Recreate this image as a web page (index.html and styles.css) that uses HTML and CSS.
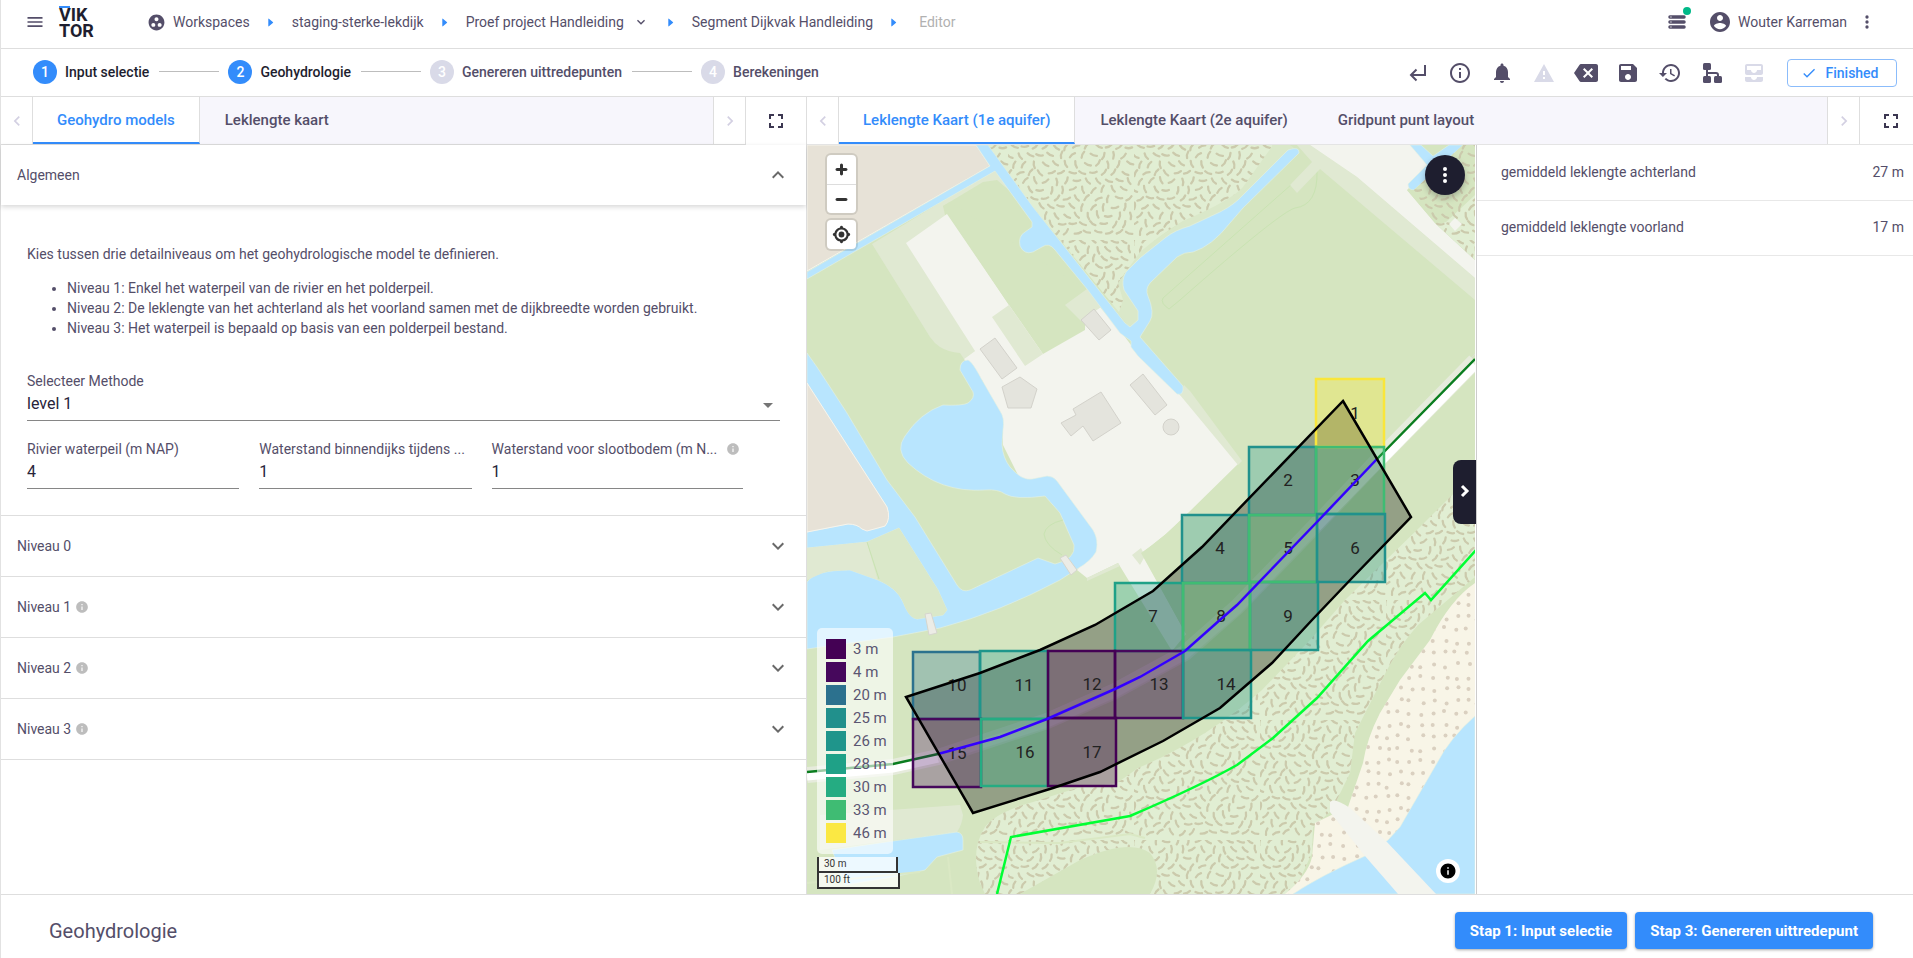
FILE: index.html
```html
<!DOCTYPE html>
<html lang="nl">
<head>
<meta charset="utf-8">
<title>Geohydrologie</title>
<link rel="stylesheet" href="styles.css">
</head>
<body>
<svg class="defs" aria-hidden="true">
  <symbol id="i-menu" viewBox="0 0 24 24"><path d="M3 18h18v-2H3v2zm0-5h18v-2H3v2zm0-7v2h18V6H3z"/></symbol>
  <symbol id="i-group" viewBox="0 0 24 24"><path d="M12 2C6.48 2 2 6.48 2 12s4.48 10 10 10 10-4.48 10-10S17.52 2 12 2zM8 17.5c-1.38 0-2.5-1.12-2.5-2.5s1.12-2.5 2.5-2.5 2.5 1.12 2.5 2.5-1.12 2.5-2.5 2.5zM9.5 8c0-1.38 1.12-2.5 2.5-2.5s2.5 1.12 2.5 2.5-1.12 2.5-2.5 2.5S9.5 9.38 9.5 8zm6.5 9.5c-1.38 0-2.5-1.12-2.5-2.5s1.12-2.5 2.5-2.5 2.5 1.12 2.5 2.5-1.12 2.5-2.5 2.5z"/></symbol>
  <symbol id="i-server" viewBox="0 0 24 24"><path fill-rule="evenodd" d="M3.500 4h17a1.500 1.500 0 0 1 0 4h-17a1.500 1.500 0 0 1 0-4zM4 5.300v1.400h1.500v-1.400zM3.500 10h17a1.500 1.500 0 0 1 0 4h-17a1.500 1.500 0 0 1 0-4zM4 11.300v1.400h1.500v-1.400zM3.500 16h17a1.500 1.500 0 0 1 0 4h-17a1.500 1.500 0 0 1 0-4zM4 17.300v1.400h1.500v-1.400z"/></symbol>
  <symbol id="i-user" viewBox="0 0 24 24"><path d="M12 2C6.48 2 2 6.48 2 12s4.48 10 10 10 10-4.48 10-10S17.52 2 12 2zm0 3c1.66 0 3 1.34 3 3s-1.34 3-3 3-3-1.34-3-3 1.34-3 3-3zm0 14.2c-2.500 0-4.710-1.280-6-3.220.03-1.990 4-3.080 6-3.080 1.990 0 5.970 1.090 6 3.080-1.290 1.940-3.500 3.220-6 3.220z"/></symbol>
  <symbol id="i-dots" viewBox="0 0 24 24"><circle cx="12" cy="6" r="2"/><circle cx="12" cy="12" r="2"/><circle cx="12" cy="18" r="2"/></symbol>
  <symbol id="i-return" viewBox="0 0 24 24"><path fill="none" stroke="currentColor" stroke-width="2" d="M19 4v10H5.500M10.500 8.500 5 14l5.500 5.500"/></symbol>
  <symbol id="i-info" viewBox="0 0 24 24"><path d="M11 7h2v2h-2zm0 4h2v6h-2zm1-9C6.480 2 2 6.480 2 12s4.480 10 10 10 10-4.480 10-10S17.520 2 12 2zm0 18c-4.410 0-8-3.590-8-8s3.590-8 8-8 8 3.590 8 8-3.590 8-8 8z"/></symbol>
  <symbol id="i-infofull" viewBox="0 0 24 24"><path d="M12 2C6.480 2 2 6.480 2 12s4.480 10 10 10 10-4.480 10-10S17.520 2 12 2zm1 15h-2v-6h2v6zm0-8h-2V7h2v2z"/></symbol>
  <symbol id="i-bell" viewBox="0 0 24 24"><path d="M12 22c1.100 0 2-.9 2-2h-4c0 1.100.89 2 2 2zm6-6v-5c0-3.070-1.640-5.640-4.500-6.320V4c0-.83-.67-1.500-1.500-1.500s-1.500.67-1.500 1.500v.68C7.630 5.360 6 7.920 6 11v5l-2 2v1h16v-1l-2-2z"/></symbol>
  <symbol id="i-warn" viewBox="0 0 24 24"><path d="M2 21h20L12 3 2 21zm11-3h-2v-2h2v2zm0-4h-2v-4h2v4z"/></symbol>
  <symbol id="i-back" viewBox="0 0 24 24"><path d="M22 3H7c-.69 0-1.230.35-1.590.88L0 12l5.410 8.110c.36.53.9.89 1.590.89h15c1.100 0 2-.9 2-2V5c0-1.100-.9-2-2-2zm-3 12.590L17.590 17 14 13.410 10.410 17 9 15.590 12.590 12 9 8.410 10.410 7 14 10.590 17.590 7 19 8.410 15.410 12 19 15.590z"/></symbol>
  <symbol id="i-save" viewBox="0 0 24 24"><path d="M17 3H5c-1.110 0-2 .9-2 2v14c0 1.100.89 2 2 2h14c1.100 0 2-.9 2-2V7l-4-4zm-5 16c-1.660 0-3-1.340-3-3s1.340-3 3-3 3 1.340 3 3-1.340 3-3 3zm3-10H5V5h10v4z"/></symbol>
  <symbol id="i-history" viewBox="0 0 24 24"><path d="M13 3c-4.970 0-9 4.030-9 9H1l3.890 3.890.07.14L9 12H6c0-3.870 3.130-7 7-7s7 3.130 7 7-3.130 7-7 7c-1.930 0-3.680-.79-4.940-2.060l-1.420 1.420C8.270 19.990 10.510 21 13 21c4.970 0 9-4.030 9-9s-4.030-9-9-9zm-1 5v5l4.280 2.540.72-1.210-3.500-2.080V8H12z"/></symbol>
  <symbol id="i-tree" viewBox="0 0 24 24"><rect x="3" y="2" width="8" height="7" rx="1.500"/><rect x="3" y="15" width="8" height="7" rx="1.500"/><rect x="14" y="15" width="8" height="7" rx="1.500"/><path fill="none" stroke="currentColor" stroke-width="2" d="M7 8v8M7 12h9q2 0 2 2v2"/></symbol>
  <symbol id="i-inbox" viewBox="0 0 24 24"><path d="M19 3H5c-1.100 0-2 .9-2 2v7c0 1.100.9 2 2 2h14c1.100 0 2-.9 2-2V5c0-1.100-.9-2-2-2zm0 6h-4c0 1.620-1.380 3-3 3s-3-1.380-3-3H5V5h14v4zm-4 7h6v3c0 1.100-.9 2-2 2H5c-1.100 0-2-.9-2-2v-3h6c0 1.660 1.340 3 3 3s3-1.340 3-3z"/></symbol>
  <symbol id="i-check" viewBox="0 0 24 24"><path d="M9 16.200 4.800 12l-1.400 1.400L9 19 21 7l-1.400-1.400z"/></symbol>
  <symbol id="i-full" viewBox="0 0 24 24"><path d="M7 14H5v5h5v-2H7v-3zm-2-4h2V7h3V5H5v5zm12 7h-3v2h5v-5h-2v3zM14 5v2h3v3h2V5h-5z"/></symbol>
  <symbol id="i-left" viewBox="0 0 24 24"><path d="M15.410 7.410 14 6l-6 6 6 6 1.410-1.410L10.830 12z"/></symbol>
  <symbol id="i-right" viewBox="0 0 24 24"><path d="M8.590 16.590 10 18l6-6-6-6-1.410 1.410L13.170 12z"/></symbol>
  <symbol id="i-down" viewBox="0 0 24 24"><path d="M16.590 8.590 12 13.170 7.410 8.590 6 10l6 6 6-6z"/></symbol>
  <symbol id="i-up" viewBox="0 0 24 24"><path d="m12 8-6 6 1.410 1.410L12 10.830l4.590 4.580L18 14z"/></symbol>
  <symbol id="i-tri" viewBox="0 0 6 10"><path d="M0 1Q0 0 1 1L5 4.500Q6 5 5 5.500L1 9Q0 10 0 9z"/></symbol>
</svg>

<div class="app">
<header class="topbar">
  <button class="icon-btn" aria-label="Menu"><svg class="ic20"><use href="#i-menu"/></svg></button>
  <a class="logo" href="#">VIKTOR</a>
  <nav class="crumbs">
    <a class="ws" href="#"><svg class="ic19"><use href="#i-group"/></svg>Workspaces</a>
    <svg class="tri"><use href="#i-tri"/></svg>
    <a href="#">staging-sterke-lekdijk</a>
    <svg class="tri"><use href="#i-tri"/></svg>
    <a href="#">Proef project Handleiding</a>
    <button class="icon-btn crumb-menu" aria-label="Toon projecten"><svg class="ic16"><use href="#i-down"/></svg></button>
    <svg class="tri"><use href="#i-tri"/></svg>
    <a href="#">Segment Dijkvak Handleiding</a>
    <svg class="tri"><use href="#i-tri"/></svg>
    <span class="current">Editor</span>
  </nav>
  <div class="account">
    <button class="icon-btn jobs" aria-label="Taken"><svg class="ic20"><use href="#i-server"/></svg><i class="badge"></i></button>
    <button class="user"><svg class="ic24"><use href="#i-user"/></svg>Wouter Karreman</button>
    <button class="icon-btn" aria-label="Meer"><svg class="ic20"><use href="#i-dots"/></svg></button>
  </div>
</header>

<div class="steps">
  <ol class="stepper">
    <li class="step on"><a href="#"><b>1</b>Input selectie</a></li>
    <li class="step on"><a href="#"><b>2</b>Geohydrologie</a></li>
    <li class="step"><a href="#"><b>3</b>Genereren uittredepunten</a></li>
    <li class="step"><a href="#"><b>4</b>Berekeningen</a></li>
  </ol>
  <div class="tools">
    <button class="icon-btn" aria-label="Terug"><svg class="ic24"><use href="#i-return"/></svg></button>
    <button class="icon-btn" aria-label="Info"><svg class="ic24"><use href="#i-info"/></svg></button>
    <button class="icon-btn" aria-label="Meldingen"><svg class="ic24"><use href="#i-bell"/></svg></button>
    <button class="icon-btn off" aria-label="Waarschuwingen"><svg class="ic24"><use href="#i-warn"/></svg></button>
    <button class="icon-btn" aria-label="Wissen"><svg class="ic24"><use href="#i-back"/></svg></button>
    <button class="icon-btn" aria-label="Opslaan"><svg class="ic24"><use href="#i-save"/></svg></button>
    <button class="icon-btn" aria-label="Geschiedenis"><svg class="ic24"><use href="#i-history"/></svg></button>
    <button class="icon-btn" aria-label="Structuur"><svg class="ic24"><use href="#i-tree"/></svg></button>
    <button class="icon-btn off" aria-label="Archief"><svg class="ic24"><use href="#i-inbox"/></svg></button>
    <button class="finished"><svg class="ic16"><use href="#i-check"/></svg>Finished</button>
  </div>
</div>

<main class="work">
  <section class="pane form-pane">
    <div class="tabbar">
      <button class="scroll first" aria-label="Vorige"><svg class="ic20"><use href="#i-left"/></svg></button>
      <div class="tabs"><button class="tab active">Geohydro models</button><button class="tab">Leklengte kaart</button></div>
      <button class="scroll" aria-label="Volgende"><svg class="ic20"><use href="#i-right"/></svg></button>
      <button class="fullscreen" aria-label="Volledig scherm"><svg class="ic24"><use href="#i-full"/></svg></button>
    </div>
    <div class="accordion">
      <button class="acc-head open">Algemeen<svg class="ic24 chev"><use href="#i-up"/></svg></button>
      <div class="acc-body">
        <p>Kies tussen drie detailniveaus om het geohydrologische model te definieren.</p>
        <ul>
          <li>Niveau 1: Enkel het waterpeil van de rivier en het polderpeil.</li>
          <li>Niveau 2: De leklengte van het achterland als het voorland samen met de dijkbreedte worden gebruikt.</li>
          <li>Niveau 3: Het waterpeil is bepaald op basis van een polderpeil bestand.</li>
        </ul>
        <div class="field method">
          <label for="method">Selecteer Methode</label>
          <select id="method"><option>level 1</option></select>
        </div>
        <div class="fields">
          <div class="field"><label for="f1">Rivier waterpeil (m NAP)</label><input id="f1" type="text" value="4"></div>
          <div class="field"><label for="f2">Waterstand binnendijks tijdens ...</label><input id="f2" type="text" value="1"></div>
          <div class="field"><label for="f3"><span>Waterstand voor slootbodem (m N...</span><svg class="ic14 hint"><use href="#i-infofull"/></svg></label><input id="f3" type="text" value="1"></div>
        </div>
      </div>
      <button class="acc-head">Niveau 0<svg class="ic24 chev"><use href="#i-down"/></svg></button>
      <button class="acc-head">Niveau 1<svg class="ic14 hint"><use href="#i-infofull"/></svg><svg class="ic24 chev"><use href="#i-down"/></svg></button>
      <button class="acc-head">Niveau 2<svg class="ic14 hint"><use href="#i-infofull"/></svg><svg class="ic24 chev"><use href="#i-down"/></svg></button>
      <button class="acc-head">Niveau 3<svg class="ic14 hint"><use href="#i-infofull"/></svg><svg class="ic24 chev"><use href="#i-down"/></svg></button>
    </div>
  </section>

  <section class="pane view-pane">
    <div class="tabbar lined">
      <button class="scroll first" aria-label="Vorige"><svg class="ic20"><use href="#i-left"/></svg></button>
      <div class="tabs"><button class="tab active">Leklengte Kaart (1e aquifer)</button><button class="tab">Leklengte Kaart (2e aquifer)</button><button class="tab">Gridpunt punt layout</button></div>
      <button class="scroll" aria-label="Volgende"><svg class="ic20"><use href="#i-right"/></svg></button>
      <button class="fullscreen" aria-label="Volledig scherm"><svg class="ic24"><use href="#i-full"/></svg></button>
    </div>
    <div class="view">
      <div class="map">
        <svg class="canvas" viewBox="807 145 668 749" preserveAspectRatio="xMidYMid slice">
          <defs>
            <pattern id="wood" width="126" height="120" patternUnits="userSpaceOnUse"></pattern>
            <pattern id="sand" width="90" height="84" patternUnits="userSpaceOnUse"></pattern>
          </defs>
          <rect class="grass" x="807" y="145" width="668" height="749"/>
          <path class="beige" d="M807 145H976L990 166 807 271z"/>
          <path class="pale" d="M872 244 994 170 1012 193 997 180 983 182 943 206 975 351 964 359 960 353Q948 352 940 347 934 343 930 337z"/>
          <path class="paved" d="M906 243 947 214 1009 305 1085 330 1081 321 1100 307 1122 333 1140 357 1180 395 1192 400 1240 462 1188 513 1166 534 1142 553 1186 634 1172 651 1118 563 1087 578 1077 570 1096 548 1090 528 1055 481 1020 479 1003 445 1003 420 982 380 964 359 975 351z"/>
          <path class="grass" d="M943 206 950 202 1086 290 1085 330 1043 354 1009 305z"/>
          <path class="pale" d="M992 317 1009 305 1043 354 1025 366zM1065 305 1087 289 1101 307 1081 321zM1184 385 1190 391 1242 461 1238 465 1180 395zM1132 555 1141 548 1145 556 1140 565zM1087 578 1118 563 1120 566 1087 581z"/>
          <path class="grass" d="M1141 553Q1165 537 1188 513L1300 500 1230 600 1186 634z"/>
          <path class="rim" d="M1273 145H1290L1299 152 1230 215 1150 265 1140 310 1138 322 1130 328 1112 306 1118 283 1140 250 1183 221 1230 193z"/>
          <path class="woodland" d="M988 145H1273L1243 187Q1232 200 1183 221 1160 235 1140 252L1118 283 1123 300 1119 312 1033 207z"/>
          <path class="wood" d="M988 145H1273L1243 187Q1232 200 1183 221 1160 235 1140 252L1118 283 1123 300 1119 312 1033 207z"/>
          <path class="water" d="M807 272 990 166 976 145H988L1033 207 1125 323 1130 327 1138 320V311L1124 290Q1121 280 1126 272L1140 258 1165 238Q1175 230 1190 226L1220 212Q1234 205 1243 195L1288 150Q1300 146 1299 153L1243 208 1230 223Q1212 246 1193 252 1184 252 1177 257L1150 283Q1145 289 1148 296 1155 313 1150 321L1140 337 1183 386Q1184 396 1177 394L1138 356 1131 347V341L1124 336 1120 333 1087 289 1055 250Q1049 242 1042 247L1033 252Q1024 255 1020 246 1018 236 1025 232L1032 227V222L995 171 807 279z"/>
          <path class="water" d="M960 370Q960 360 968 360 972 361 982 380L1000 411Q1005 418 1003 430L1002 445Q1003 458 1010 467 1022 481 1032 479L1047 476Q1053 476 1057 481L1093 530Q1099 540 1096 552 1090 562 1077 569L1060 580Q1000 612 940 628L893 637 807 649V582Q815 570 850 570L878 580Q897 588 903 602 909 618 917 619L943 615 947 610 938 590 899 528 867 542 807 548V532L848 524Q857 524 862 529 868 532 885 526 891 519 887 507L807 383V353L817 367 847 413 887 480 915 517 957 585Q962 593 970 590L1038 558 1055 564Q1076 559 1074 545L1060 513 1045 496Q1015 500 1005 494 998 489 985 490 940 493 908 463 895 450 905 436 920 413 943 405 962 406 968 403 975 398 973 392z"/>
          <path class="beige" d="M807 383 887 507Q891 519 885 526L867 531 862 529Q857 524 848 524L807 532z"/>
          <path class="pale" d="M807 548 867 542 878 580 850 570 827 571 807 580z"/>
          <path class="rim" d="M867 542 899 528 938 590 947 610 943 615 917 619Q909 618 903 602 897 588 878 580z"/>
          <path class="hair" d="M867 542 879 579M1063 520Q1046 524 1044 534 1045 545 1062 555M1317 171Q1318 205 1295 208 1280 212 1180 300L1169 309Q1160 303 1163 298L1292 184"/>
          <path class="bridge" d="M1060 558 1066 555 1077 570 1071 575zM925 614 931 613 937 633 929 635z"/>
          <path class="pale" d="M1297 145H1310L1357 177 1475 278V300L1320 169 1297 193 1290 185 1312 162z"/>
          <path class="paved" d="M1310 145H1410L1432 165 1407 190 1435 223 1475 260V278L1357 177z"/>
          <path class="water" d="M1410 145H1421L1433 156 1449 145H1463L1414 190Q1408 190 1408 184L1427 165z"/>
          <path class="grass" d="M1414 190 1463 145H1475V260L1435 223 1407 190z"/>
          <path class="woodland" d="M1446 222 1475 195V260L1437 225z"/>
          <path class="wood" d="M1414 190 1463 145H1475V260L1435 223z"/>
          <path class="paved" d="M1455 218 1462 224 1455 231 1449 224z"/>
          <path class="building" d="M980 349 995 338 1017 368 1002 379zM1081 320 1094 309 1111 330 1099 340zM1002 387 1020 377 1037 389 1031 408H1008zM1073 409 1101 392 1121 423 1093 441 1083 426 1071 436 1061 423 1076 415zM1130 385 1143 374 1167 405 1155 415z"/>
          <circle class="building" cx="1171" cy="427" r="8"/>
          <path class="woodland" d="M1475 478 1452 495 1420 527 1345 600 1310 640 1262 690Q1205 740 1138 768L1117 783 1077 788 1033 802Q996 812 985 827 970 850 980 883L985 894H1020L1080 860Q1130 838 1150 853 1164 870 1150 894H1293L1312 853 1313 827 1332 810 1350 773 1355 733 1387 670Q1400 645 1418 625L1475 577z"/>
          <path class="wood" d="M1475 478 1452 495 1420 527 1345 600 1310 640 1262 690Q1205 740 1138 768L1117 783 1077 788 1033 802Q996 812 985 827 970 850 980 883L985 894H1020L1080 860Q1130 838 1150 853 1164 870 1150 894H1293L1312 853 1313 827 1332 810 1350 773 1355 733 1387 670Q1400 645 1418 625L1475 577z"/>
          <path class="rimline" d="M980 842 1060 843 1130 834 1145 838"/>
          <path class="beach" d="M1475 583Q1450 600 1430 640L1400 680 1380 713Q1367 738 1363 763L1348 807 1315 823 1312 857Q1308 875 1285 894H1475z"/>
          <path class="sand" d="M1475 583Q1450 600 1430 640L1400 680 1380 713Q1367 738 1363 763L1348 807 1315 823 1312 857Q1308 875 1285 894H1475z"/>
          <path class="water" d="M1293 894Q1320 876 1365 856L1388 840 1400 827 1437 763Q1450 738 1475 716V894z"/>
          <path class="paved" d="M1330 802Q1334 797 1350 808L1387 842 1436 894H1398L1365 856 1330 812z"/>
          <path class="pale" d="M820 815 960 805 963 815Q962 825 957 832L820 850z"/>
          <path class="water" d="M832 850 893 841 957 832Q963 833 963 840L963 850 937 857 925 870 893 877 845 885z"/>
          <path class="rimline" d="M807 883 920 872M948 857 952 894"/>

          <path class="road-edge" d="M1475 354 1372 458 1317 516 1237 599 1185 645 1115 683 1047 713 938 754 893 766 807 774"/>
          <path class="road-base" d="M1475 361 1377 461 1317 524 1237 607 1185 653 1115 691 1047 721 938 757 893 767 807 775"/>
          <path class="road" d="M1475 365 1379 463 1317 527M938 758 893 768 807 776"/>
          <path class="road-faint" d="M1317 527 1237 610 1185 655 1115 693 1047 723 938 758"/>
          <path class="dike" d="M1475 359 1377 459M938 754 893 764 807 772"/>

          <path class="segment" d="M1343 401 1411 517 1353 577 1312 620 1272 663 1220 708 1163 741 1100 772 1053 788 973 813 906 697 980 673 1040 650 1095 625 1153 591 1202 547z"/>
          <g class="cells">
            <rect x="1316" y="379" width="68" height="68" fill="#fbe723" stroke="#f9e63b"/>
            <rect x="1249" y="447" width="67" height="68" fill="#21918c" stroke="#21918c"/>
            <rect x="1182" y="515" width="67" height="68" fill="#21918c" stroke="#21918c"/>
            <rect x="1115" y="583" width="68" height="68" fill="#1fa187" stroke="#1fa187"/>
            <rect x="913" y="652" width="67" height="67" fill="#2c728e" stroke="#2c728e"/>
            <rect x="980" y="651" width="68" height="68" fill="#1f968b" stroke="#1f968b"/>
            <rect x="1250" y="582" width="68" height="68" fill="#1f958b" stroke="#1f958b"/>
            <rect x="1316" y="447" width="68" height="67" fill="#3fbc73" stroke="#3fbc73"/>
            <rect x="1249" y="515" width="68" height="67" fill="#3fbc73" stroke="#3fbc73"/>
            <rect x="1183" y="583" width="67" height="67" fill="#3fbc73" stroke="#3fbc73"/>
            <rect x="1317" y="514" width="68" height="68" fill="#21918c" stroke="#21918c"/>
            <rect x="913" y="719" width="68" height="68" fill="#46085c" stroke="#46085c"/>
            <rect x="981" y="719" width="67" height="67" fill="#25ac82" stroke="#25ac82"/>
            <rect x="1115" y="651" width="68" height="67" fill="#46085c" stroke="#46085c"/>
            <rect x="1048" y="651" width="67" height="67" fill="#440154" stroke="#440154"/>
            <rect x="1183" y="650" width="68" height="68" fill="#1f958b" stroke="#1f958b"/>
            <rect x="1048" y="718" width="68" height="68" fill="#440154" stroke="#440154"/>
          </g>
          <g class="nums">
            <text x="1355" y="419">1</text><text x="1288" y="486">2</text><text x="1355" y="486">3</text>
            <text x="1220" y="554">4</text><text x="1288" y="554">5</text><text x="1355" y="554">6</text>
            <text x="1153" y="622">7</text><text x="1221" y="622">8</text><text x="1288" y="622">9</text>
            <text x="957" y="691">10</text><text x="1024" y="691">11</text><text x="1092" y="690">12</text>
            <text x="1159" y="690">13</text><text x="1226" y="690">14</text><text x="957" y="759">15</text>
            <text x="1025" y="758">16</text><text x="1092" y="758">17</text>
          </g>
          <path class="axis" d="M1377 459 1317 522 1237 605 1221 619 1185 651 1140 677 1115 689 1047 719 1000 737 938 754"/>
          <path class="outline" d="M1343 401 1411 517 1353 577 1312 620 1272 663 1220 708 1163 741 1100 772 1053 788 973 813 906 697 980 673 1040 650 1095 625 1153 591 1202 547z"/>
          <path class="border-line" d="M1476 550 1431 600 1425 593 1368 641 1317 698 1273 738 1237 765Q1200 786 1130 816L1011 837 997 894"/>
        </svg>

        <div class="zoom">
          <div class="group">
            <button aria-label="Inzoomen"><svg class="ic29" viewBox="0 0 29 29"><path d="M14.500 8.500c-.75 0-1.500.75-1.500 1.500v3h-3c-.75 0-1.500.75-1.500 1.500S9.250 16 10 16h3v3c0 .75.75 1.500 1.500 1.500S16 19.750 16 19v-3h3c.75 0 1.500-.75 1.500-1.500S19.750 13 19 13h-3v-3c0-.75-.75-1.500-1.500-1.500z"/></svg></button>
            <button aria-label="Uitzoomen"><svg class="ic29" viewBox="0 0 29 29"><path d="M10 13c-.75 0-1.500.75-1.500 1.500S9.250 16 10 16h9c.75 0 1.500-.75 1.500-1.500S19.750 13 19 13h-9z"/></svg></button>
          </div>
          <div class="group">
            <button aria-label="Mijn locatie"><svg class="ic29" viewBox="0 0 20 20"><path d="M10 4C9 4 9 5 9 5v.1A5 5 0 0 0 5.100 9H5s-1 0-1 1 1 1 1 1h.1A5 5 0 0 0 9 14.900v.1s0 1 1 1 1-1 1-1v-.1a5 5 0 0 0 3.900-3.900h.1s1 0 1-1-1-1-1-1h-.1A5 5 0 0 0 11 5.100V5s0-1-1-1zm0 2.500a3.500 3.500 0 1 1 0 7 3.500 3.500 0 1 1 0-7z"/><circle cx="10" cy="10" r="2"/></svg></button>
          </div>
        </div>
        <div class="corner">
          <ul class="legend">
            <li><i class="c3"></i>3 m</li><li><i class="c4"></i>4 m</li><li><i class="c20"></i>20 m</li>
            <li><i class="c25"></i>25 m</li><li><i class="c26"></i>26 m</li><li><i class="c28"></i>28 m</li>
            <li><i class="c30"></i>30 m</li><li><i class="c33"></i>33 m</li><li><i class="c46"></i>46 m</li>
          </ul>
          <div class="scale metric">30 m</div>
          <div class="scale imperial">100 ft</div>
        </div>
        <button class="fab" aria-label="Kaartmenu"><svg class="ic24"><use href="#i-dots"/></svg></button>
        <button class="drawer" aria-label="Gegevens verbergen"><svg class="ic24" viewBox="0 0 24 24"><path fill="none" stroke="currentColor" stroke-width="3" d="m9 6 5 5-5 5"/></svg></button>
        <button class="attrib" aria-label="Bronvermelding"><svg class="ic18"><use href="#i-infofull"/></svg></button>
      </div>
      <dl class="data">
        <div><dt>gemiddeld leklengte achterland</dt><dd>27 m</dd></div>
        <div><dt>gemiddeld leklengte voorland</dt><dd>17 m</dd></div>
      </dl>
    </div>
  </section>
</main>

<footer class="bottom">
  <h1>Geohydrologie</h1>
  <button class="primary">Stap 1: Input selectie</button>
  <button class="primary">Stap 3: Genereren uittredepunt</button>
</footer>
</div>
<script src="texture.js"></script>
</body>
</html>
```
FILE: styles.css
```css
* { box-sizing: border-box; }
body {
  margin: 0;
  font-family: Roboto, "Liberation Sans", sans-serif;
  font-size: 14px;
  line-height: 20px;
  color: #544e69;
  background: #fff;
}
button { font: inherit; color: inherit; background: none; border: 0; padding: 0; cursor: pointer; }
a { color: inherit; text-decoration: none; }
svg { fill: currentColor; flex: none; display: block; }
ul, ol, dl, dd { margin: 0; padding: 0; list-style: none; }
.defs { position: absolute; width: 0; height: 0; }
.ic14 { width: 14px; height: 14px; }
.ic16 { width: 16px; height: 16px; }
.ic18 { width: 18px; height: 18px; }
.ic19 { width: 19px; height: 19px; }
.ic20 { width: 20px; height: 20px; }
.ic24 { width: 24px; height: 24px; }
.ic29 { width: 29px; height: 29px; }
.icon-btn { display: block; }
.off { color: #d9dae8; }

.app { display: flex; flex-direction: column; min-height: 100vh; border-left: 1px solid #e2e2e2; }

/* top bar */
.topbar { display: flex; align-items: center; height: 49px; padding: 0 36px 4px 24px; border-bottom: 1px solid #dedede; }
.logo {
  width: 37px; margin-left: 14px; padding-top: 2px; word-break: break-all;
  font-size: 18px; line-height: 16px; font-weight: 700; color: #1e1e2f;
  background: linear-gradient(#338cfb, #338cfb) 0 1px / 11px 2px no-repeat;
}
.crumbs { display: flex; align-items: center; gap: 18px; margin-left: 51px; }
.ws { display: flex; align-items: center; gap: 7px; }
.tri { width: 6px; height: 9px; color: #338cfb; }
.crumb-menu { margin: 0 1px 0 -9px; }
.current { color: #b1b1b1; margin-left: 4px; }
.account { display: flex; align-items: center; margin-left: auto; gap: 10px; }
.jobs { position: relative; margin-right: 11px; }
.badge { position: absolute; right: -4px; top: -5px; width: 8px; height: 8px; border-radius: 50%; background: #00b988; }
.user { display: flex; align-items: center; gap: 6px; }

/* stepper */
.steps { display: flex; align-items: center; justify-content: space-between; height: 48px; padding: 0 16px 0 32px; border-bottom: 1px solid #dedede; }
.stepper { display: flex; font-weight: 500; margin-bottom: 2px; }
.step { display: flex; align-items: center; }
.step a { display: flex; align-items: center; gap: 8px; }
.step + .step::before { content: ""; width: 60px; height: 1px; margin: 0 9px 0 10px; background: #bdbdbd; }
.step b { width: 24px; height: 24px; line-height: 24px; border-radius: 50%; text-align: center; font-weight: 500; color: #fff; background: #d9dae8; }
.step.on { color: #1e1e2f; }
.step.on b { background: #338cfb; }
.tools { display: flex; align-items: center; gap: 18px; }
.finished {
  display: flex; align-items: center; justify-content: center; gap: 8px; height: 28px; width: 110px; margin-left: 3px; padding-right: 4px;
  border: 1px solid #8bbcfb; border-radius: 4px; font-weight: 500; color: #338cfb;
}

/* panes */
.work { flex: 1; display: grid; grid-template-columns: 806fr 1106fr; }
.pane { display: flex; flex-direction: column; min-width: 0; }
.form-pane { border-right: 1px solid #dedede; }
.tabbar { display: flex; height: 48px; }
.view-pane .tabbar { border-bottom: 1px solid #e4e4e4; }
.scroll { display: flex; align-items: center; justify-content: center; width: 33px; color: #d3d0e2; border: 1px solid #dedede; border-width: 0 1px 1px; }
.scroll.first { width: 32px; border-left: 0; }
.tabs { flex: 1; display: flex; background: #f7f6fc; border-bottom: 1px solid #dedede; }
.lined .tabs, .lined .scroll { border-bottom: 0; }
.tab { padding: 0 25px 1px; font-size: 15px; font-weight: 500; }
.tab.active { padding: 1px 24px 0; color: #338cfb; background: #fff; border-right: 1px solid #dedede; border-bottom: 2px solid #338cfb; }
.fullscreen { width: 53px; padding-left: 8px; display: flex; align-items: center; justify-content: center; color: #3c3751; }
.form-pane .fullscreen { width: 60px; padding-left: 0; }

/* accordion */
.acc-head { display: flex; align-items: center; gap: 4px; width: 100%; height: 61px; padding: 0 16px; border-bottom: 1px solid #dedede; }
.acc-head.open { border-bottom: 0; height: 60px; box-shadow: 0 2px 5px rgba(0, 0, 0, .16); }
.chev { margin-left: auto; color: #696969; }
.hint { color: #bdbdbd; }
.acc-body { padding: 39px 26px 26px; border-bottom: 1px solid #dedede; }
.acc-body p { margin: 0 0 14px; }
.acc-body ul { list-style: disc; padding-left: 40px; margin-bottom: 33px; }
.field { display: flex; flex-direction: column; min-width: 0; }
.field label { display: flex; align-items: center; gap: 9px; height: 20px; white-space: nowrap; }
.field input, .field select {
  width: 100%; height: 30px; padding: 0 0 4px; border: 0; border-bottom: 1px solid #868686; border-radius: 0;
  background: none; font: 16px/20px Roboto, "Liberation Sans", sans-serif; color: #27243a; outline: 0; appearance: none;
}
.method { margin-bottom: 18px; position: relative; }
.method::after { content: ""; position: absolute; right: 7px; bottom: 13px; border: 5px solid transparent; border-top-color: #757575; border-bottom: 0; }
.fields { display: grid; grid-template-columns: 212fr 212fr 251fr 17fr; gap: 20px; }

/* view */
.view { flex: 1; display: grid; grid-template-columns: 670fr 436fr; }
.map { position: relative; overflow: hidden; border-right: 1px solid #ccc; }
.canvas { position: absolute; inset: 0; width: 100%; height: 100%; border-right: 1px solid #fff; }
.grass { fill: #d5e5c0; }
.pale { fill: #e0e9d2; }
.rim { fill: #dae8c9; }
.beige { fill: #e7e2d7; stroke: #f6f4ee; stroke-width: 1; }
.paved { fill: #f3f4ee; }
.water { fill: #b8e5fe; stroke: #e6f1e0; stroke-width: .6; }
.woodland { fill: #e1eed3; }
.wood { fill: url(#wood); }
.beach { fill: #f8f5e7; }
.sand { fill: url(#sand); }
.building { fill: #e4e4dd; stroke: #d3d2cb; stroke-width: 1; }
.bridge { fill: #ecece6; stroke: #d6d6ce; stroke-width: 1; }
.hair { fill: none; stroke: #c9e3b2; stroke-width: 1; }
.rimline { fill: none; stroke: #dae8c4; stroke-width: 2; }
.road-edge { fill: none; stroke: #dcdfd3; stroke-width: 1; }
.road-base { fill: none; stroke: #e6ebdc; stroke-width: 16; }
.road { fill: none; stroke: #fff; stroke-width: 9; }
.road-faint { fill: none; stroke: #f0f2ec; stroke-width: 9; }
.dike { fill: none; stroke: #0a7d1f; stroke-width: 2.5; }
.segment { fill: #000; fill-opacity: .3; }
.outline { fill: none; stroke: #000; stroke-width: 2.5; }
.cells rect { fill-opacity: .3; stroke-width: 2.5; }
.axis { fill: none; stroke: #3300ff; stroke-width: 2.5; }
.border-line { fill: none; stroke: #00ff33; stroke-width: 2.5; }
.nums { font-size: 17px; fill: #222; text-anchor: middle; }
.tuft { fill: none; stroke: #cbcaac; stroke-width: 2.3; stroke-linecap: round; }
.grain { fill: #dad0c0; }

.zoom { position: absolute; left: 20px; top: 10px; display: grid; gap: 7px; }
.group { border-radius: 4px; background: #fff; box-shadow: 0 0 0 2px rgba(0, 0, 0, .1); color: #333; }
.group button { display: block; width: 29px; height: 29px; }
.group button + button { border-top: 1px solid #ddd; }
.corner { position: absolute; left: 10px; bottom: 5px; }
.legend { width: 76px; margin-bottom: 3px; padding: 11px 9px; display: grid; gap: 3px; border-radius: 5px; background: rgba(255, 255, 255, .6); font-size: 15px; color: #5b5672; }
.legend li { display: flex; gap: 7px; white-space: nowrap; }
.legend i { width: 20px; height: 20px; }
.c3 { background: #440154; }
.c4 { background: #46085c; }
.c20 { background: #2c718e; }
.c25 { background: #21908c; }
.c26 { background: #1f958b; }
.c28 { background: #1fa187; }
.c30 { background: #25ac82; }
.c33 { background: #3fbc73; }
.c46 { background: #fbe843; }
.scale { height: 16px; padding: 0 5px; border: 2px solid #333; border-top: 0; font-size: 10px; line-height: 14px; color: #333; background: rgba(255, 255, 255, .75); }
.metric { width: 81px; }
.imperial { width: 83px; }
.fab { position: absolute; right: 11px; top: 10px; width: 40px; height: 40px; border-radius: 50%; display: grid; place-items: center; color: #fff; background: #1e1e2f; box-shadow: 0 3px 6px rgba(0, 0, 0, .25); }
.drawer { position: absolute; right: 0; top: 315px; width: 23px; height: 64px; border-radius: 8px 0 0 8px; display: grid; place-items: center; color: #fff; background: #1e1e2f; }
.attrib { position: absolute; right: 16px; bottom: 11px; width: 24px; height: 24px; border-radius: 50%; display: grid; place-items: center; color: #000; background: #fff; }
.data { padding-top: 1px; }
.data > div { display: flex; justify-content: space-between; height: 55px; padding: 16px 9px 0 24px; border-bottom: 1px solid #e8e8e8; }

/* footer */
.bottom { display: flex; align-items: center; gap: 8px; height: 64px; padding: 8px 40px 0 48px; border-top: 1px solid #dedede; }
.bottom h1 { flex: 1; margin: 0; font-size: 20px; line-height: 24px; font-weight: 400; }
.primary { height: 37px; padding: 0 15px; border-radius: 4px; font-size: 15px; font-weight: 700; color: #fff; background: #338cfb; box-shadow: 0 1px 3px rgba(0, 0, 0, .35); }
```
FILE: texture.js
```javascript
// Fills the woodland and beach patterns with tufts and grains.
(function () {
  var ns = 'http://www.w3.org/2000/svg';
  var T = Math.PI * 2;
  var seed = 7;
  function rnd() { seed = (seed * 16807) % 2147483647; return seed / 2147483647; }
  function add(parent, name, attrs) {
    var el = document.createElementNS(ns, name);
    for (var k in attrs) el.setAttribute(k, attrs[k]);
    parent.appendChild(el);
  }
  var wood = document.getElementById('wood'), W = 126, H = 120;
  for (var r = 0; r < 14; r++) {
    for (var c = 0; c < 12; c++) {
      var x = c * 10.5 + (r % 2) * 5 + rnd() * 2, y = r * 8.57 + rnd() * 2;
      var a = 1.1 * Math.sin(T * x / W * 2 + Math.sin(T * y / H)) + 1.2 * Math.cos(T * y / H * 2 + T * x / W) + 0.5;
      var dx = Math.cos(a) * 3.3, dy = Math.sin(a) * 3.3;
      [-W, 0].forEach(function (ox) {
        [-H, 0].forEach(function (oy) {
          var px = x + ox, py = y + oy;
          add(wood, 'path', { 'class': 'tuft', d: 'M' + (px - dx).toFixed(1) + ' ' + (py - dy).toFixed(1) +
            'Q' + (px - dy * 0.4).toFixed(1) + ' ' + (py + dx * 0.4).toFixed(1) + ' ' + (px + dx).toFixed(1) + ' ' + (py + dy).toFixed(1) });
        });
      });
    }
  }
  var sand = document.getElementById('sand');
  for (var i = 0; i < 7; i++) {
    for (var j = 0; j < 8; j++) {
      add(sand, 'circle', { 'class': 'grain', cx: (j * 11 + 3 + rnd() * 5).toFixed(1), cy: (i * 12 + 3 + rnd() * 5).toFixed(1), r: 2 });
    }
  }
})();
```
